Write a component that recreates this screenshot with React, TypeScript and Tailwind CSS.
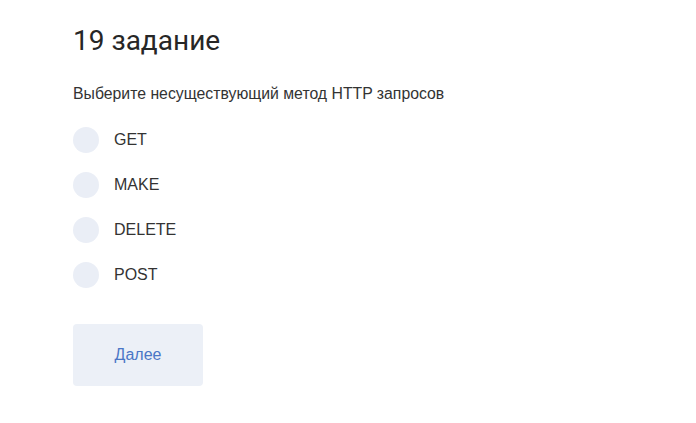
import React, { useState } from 'react';

const options = ['GET', 'MAKE', 'DELETE', 'POST'];

export default function App() {
  const [selected, setSelected] = useState<string | null>(null);

  return (
    <div className="min-h-screen bg-white" style={{ fontFamily: '"Liberation Sans", Arial, sans-serif' }}>
      <div className="px-[73px] pt-[24px]">
        <h1 className="text-[28px] leading-[34px] text-[#262626] font-normal" style={{ fontFamily: 'Roboto, "Liberation Sans", sans-serif' }}>
          19 задание
        </h1>
        <p className="mt-[26px] text-[15.8px] leading-[20px] text-[#333333]">Выберите несуществующий метод HTTP запросов</p>
        <div className="mt-[23px] flex flex-col gap-[19px]">
          {options.map((opt) => (
            <label key={opt} className="flex items-center gap-[15px] cursor-pointer">
              <span
                onClick={() => setSelected(opt)}
                className={`w-[26px] h-[26px] rounded-full ${selected === opt ? 'bg-[#4a76c6]' : 'bg-[#eaeef6]'}`}
              />
              <span className="text-[16px] text-[#333333]">{opt}</span>
            </label>
          ))}
        </div>
        <button className="mt-[36px] w-[130px] h-[62px] rounded-[4px] bg-[#ecf0f7] text-[16px] text-[#4a76c6]">
          Далее
        </button>
      </div>
    </div>
  );
}
